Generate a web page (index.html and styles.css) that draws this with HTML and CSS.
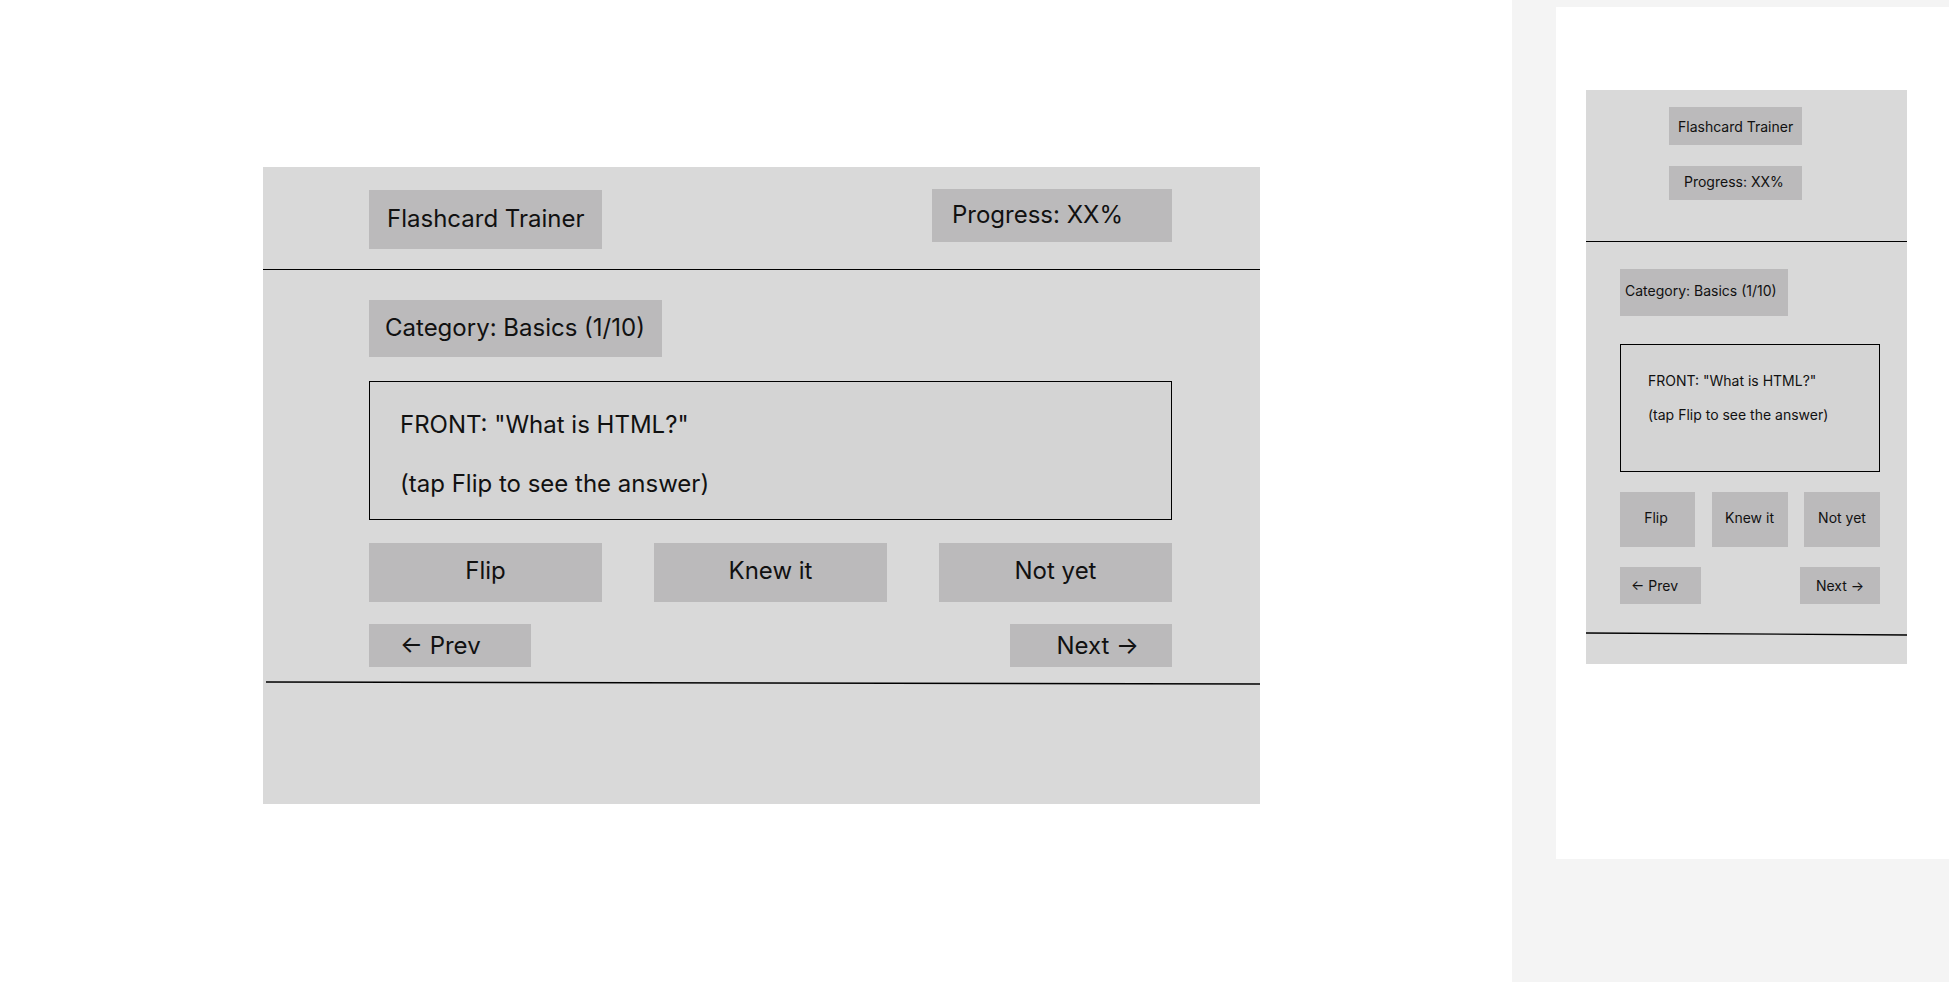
FILE: index.html
```html
<!DOCTYPE html>
<html lang="en">
<head>
<meta charset="utf-8">
<title>Flashcard Trainer</title>
<link rel="stylesheet" href="styles.css">
</head>
<body>
<div class="stage">
  <div class="frame big">
    <header class="head">
      <div class="box title">Flashcard Trainer</div>
      <div class="box progress">Progress: XX%</div>
    </header>
    <section class="content">
      <div class="box category">Category: Basics (1/10)</div>
      <div class="card">
        <p class="line">FRONT: "What is HTML?"</p>
        <p class="line">(tap Flip to see the answer)</p>
      </div>
      <div class="actions">
        <div class="box btn">Flip</div>
        <div class="box btn">Knew it</div>
        <div class="box btn">Not yet</div>
      </div>
      <div class="nav">
        <div class="box prev">← Prev</div>
        <div class="box next">Next →</div>
      </div>
    </section>
    <svg class="rule" viewBox="0 0 994 4" preserveAspectRatio="none"><line x1="0" y1="1" x2="994" y2="3" stroke="#000" stroke-width="1.3"/></svg>
  </div>
</div>
<aside class="side">
  <div class="device">
    <div class="frame small">
      <header class="head">
        <div class="box title">Flashcard Trainer</div>
        <div class="box progress">Progress: XX%</div>
      </header>
      <section class="content">
        <div class="box category">Category: Basics (1/10)</div>
        <div class="card">
          <p class="line">FRONT: "What is HTML?"</p>
          <p class="line">(tap Flip to see the answer)</p>
        </div>
        <div class="actions">
          <div class="box btn">Flip</div>
          <div class="box btn">Knew it</div>
          <div class="box btn">Not yet</div>
        </div>
        <div class="nav">
          <div class="box prev">← Prev</div>
          <div class="box next">Next →</div>
        </div>
      </section>
      <svg class="rule" viewBox="0 0 321 4" preserveAspectRatio="none"><line x1="0" y1="1" x2="321" y2="3" stroke="#000" stroke-width="1.3"/></svg>
    </div>
  </div>
</aside>
</body>
</html>
```

FILE: styles.css
```css
* { box-sizing: border-box; }
html, body { margin: 0; padding: 0; }
body {
  width: 1949px;
  height: 982px;
  overflow: hidden;
  display: flex;
  background: #ffffff;
  font-family: Inter, "Noto Sans", sans-serif;
  color: #111111;
}
p { margin: 0; }

.stage {
  width: 1512px;
  height: 982px;
  background: #ffffff;
  padding: 167px 0 0 263px;
}
.side {
  width: 437px;
  height: 982px;
  background: #f4f4f4;
  padding: 7px 0 0 44px;
}
.device {
  width: 393px;
  height: 852px;
  background: #ffffff;
  padding: 83px 0 0 30px;
}

.frame {
  background: #d9d9d9;
  display: flex;
  flex-direction: column;
}
.box {
  background: #bbbabb;
  display: flex;
  align-items: center;
  white-space: nowrap;
}
.head {
  border-bottom: 1px solid #000;
}
.content { display: flex; flex-direction: column; }
.card {
  background: #d4d4d4;
  border: 1px solid #000;
  display: flex;
  flex-direction: column;
}
.actions, .nav { display: flex; justify-content: space-between; }
.btn { justify-content: center; }
.rule { display: block; }

/* ---------- large layout ---------- */
.big { width: 997px; height: 637px; font-size: 24px; }
.big .head {
  height: 103px;
  padding: 0 88px 0 106px;
  display: flex;
  justify-content: space-between;
  align-items: flex-start;
}
.big .title { width: 233px; height: 59px; margin-top: 23px; padding: 0 0 2px 18px; }
.big .progress { width: 240px; height: 53px; margin-top: 22px; padding: 0 0 2px 20px; }
.big .content { padding: 30px 0 0 106px; width: 909px; }
.big .category { width: 293px; height: 57px; padding: 0 0 2px 16px; }
.big .card { margin-top: 24px; width: 803px; height: 139px; padding: 28px 30px 0; gap: 30px; }
.big .actions { margin-top: 23px; width: 803px; }
.big .btn { width: 233px; height: 59px; padding-bottom: 4px; }
.big .nav { margin-top: 22px; width: 803px; }
.big .prev, .big .next { width: 162px; height: 43px; }
.big .prev { padding-left: 31px; }
.big .next { justify-content: flex-end; padding-right: 33px; }
.big .rule { margin: 14px 0 0 3px; width: 994px; height: 4px; }

/* ---------- small layout ---------- */
.small { width: 321px; height: 574px; font-size: 14px; }
.small .head {
  height: 152px;
  padding: 17px 0 0 83px;
  display: flex;
  flex-direction: column;
  gap: 21px;
}
.small .title { width: 133px; height: 38px; padding-left: 9px; }
.small .progress { width: 133px; height: 34px; padding: 0 0 4px 15px; }
.small .content { padding: 27px 0 0 34px; }
.small .category { width: 168px; height: 47px; padding: 0 0 4px 5px; }
.small .card { margin-top: 28px; width: 260px; height: 128px; padding: 27px 27px 0; gap: 17px; }
.small .actions { margin-top: 20px; width: 260px; }
.small .btn { width: 76px; height: 55px; padding-bottom: 4px; }
.small .btn:first-child { width: 75px; padding-right: 3px; }
.small .nav { margin-top: 20px; width: 260px; }
.small .prev { width: 81px; height: 37px; padding-left: 11px; }
.small .next { width: 80px; height: 37px; justify-content: center; }
.small .rule { margin-top: 28px; width: 321px; height: 4px; }
```
